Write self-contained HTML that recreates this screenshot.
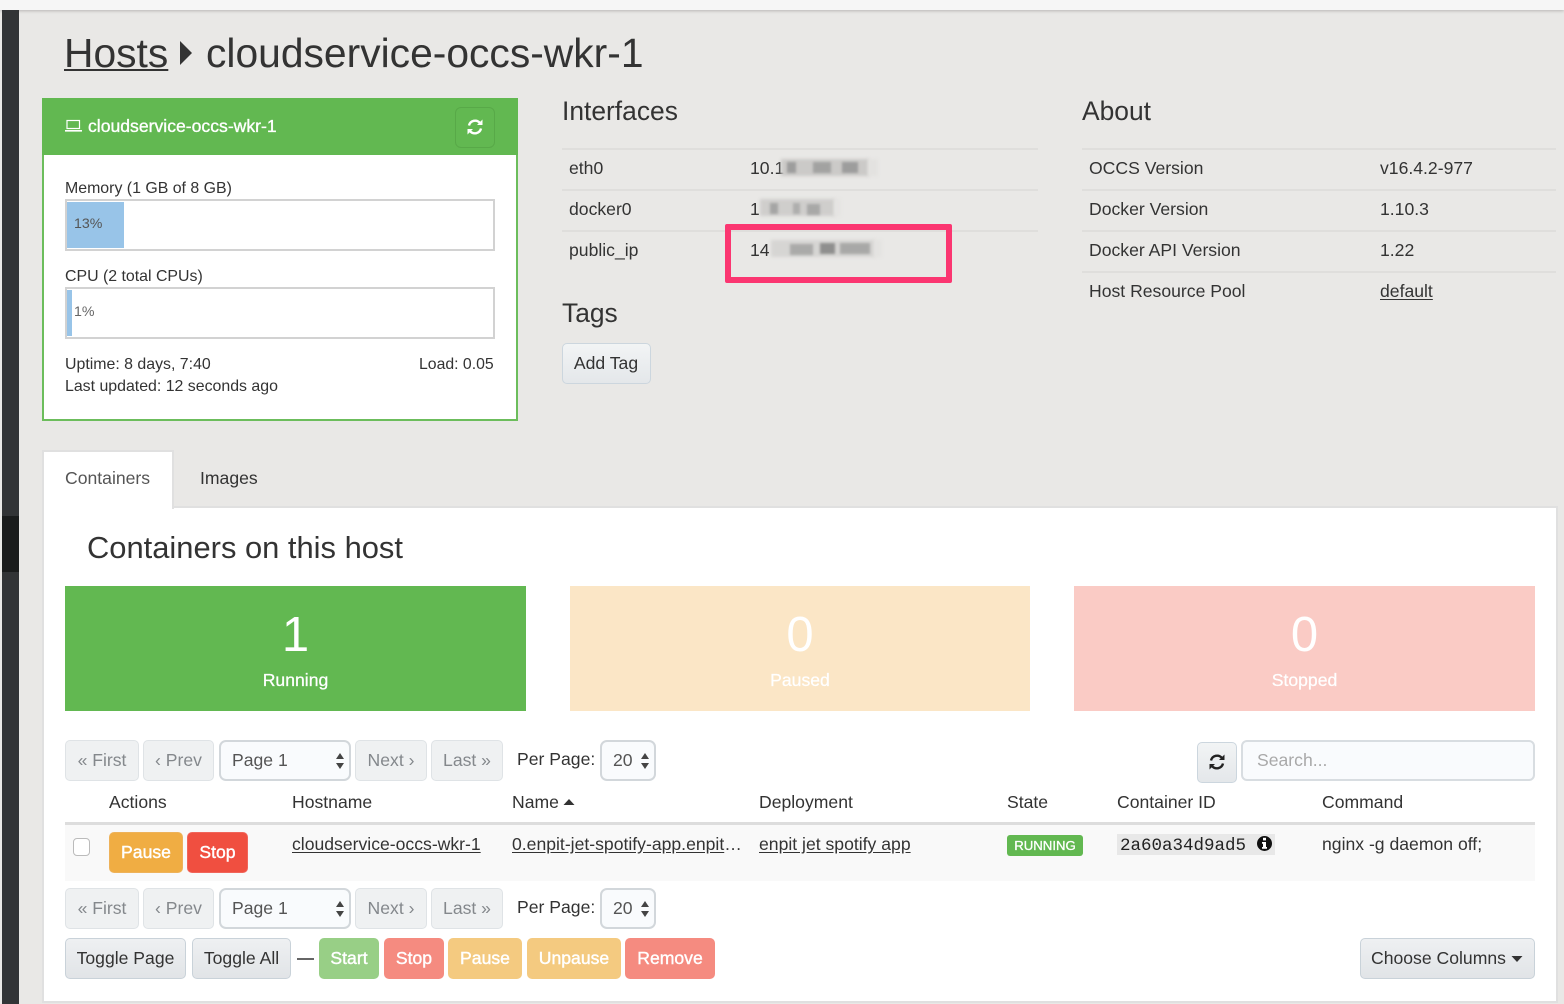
<!DOCTYPE html>
<html><head><meta charset="utf-8"><title>Hosts</title>
<style>
html,body{margin:0;padding:0}
body{width:1564px;height:1004px;position:relative;overflow:hidden;background:#e9e8e6;font-family:"Liberation Sans",sans-serif;font-size:17.6px;color:#333}
.a{position:absolute}
.t{position:absolute;white-space:nowrap;line-height:20px}
u{text-underline-offset:2px}
.b{position:absolute;box-sizing:border-box;border:1.5px solid #ccd6de;border-radius:5px;background:linear-gradient(#f2f4f5,#e4e7ea);text-align:center;white-space:nowrap;height:41px;line-height:38px;font-size:17.6px;color:#333}
.dis{background:#eff1f2;color:#84888c;border-color:#dfe3e6;height:41px}
.sel{background:#f9fbfd;border:2px solid #d2d7db;border-radius:7px;color:#555;text-align:left;padding-left:11px;height:41px;line-height:37px}
.c{color:#fff;border:1px solid transparent;font-weight:400;-webkit-text-stroke:.4px #fff}
.ln{position:absolute;height:2px;background:#dfdedc}
.blk{position:absolute;height:11px;filter:blur(1.2px)}
.st{position:absolute;height:17px;filter:blur(1.6px)}
</style></head><body>
<div class="a" style="left:0;top:0;width:1564px;height:10px;background:#f6f6f6;box-shadow:0 1px 3px rgba(0,0,0,.22)"></div>
<div class="a" style="left:2px;top:10px;width:17px;height:994px;background:#323436"></div>
<div class="a" style="left:2px;top:516px;width:17px;height:56px;background:#1a1c1c"></div>

<div class="t" style="left:64px;top:31px;font-size:40.8px;line-height:44px;color:#333"><u style="text-decoration-thickness:2px">Hosts</u></div>
<svg class="a" style="left:179px;top:40px" width="14" height="26"><path d="M1 1L13 13L1 25Z" fill="#333"/></svg>
<div class="t" style="left:206px;top:31px;font-size:40.8px;line-height:44px;color:#333">cloudservice-occs-wkr-1</div>

<!-- host panel -->
<div class="a" style="left:42px;top:98px;width:476px;height:323px;box-sizing:border-box;border:2px solid #6cbd5c;background:#fff"></div>
<div class="a" style="left:42px;top:98px;width:476px;height:57px;background:#62b851"></div>
<svg class="a" style="left:64px;top:118px" width="19" height="15" viewBox="0 0 19 15" fill="none" stroke="#fff"><rect x="3" y="2.5" width="12.5" height="8" stroke-width="1.2"/><path d="M1 12.8H18" stroke-width="1.6"/></svg>
<div class="t" style="left:88px;top:116px;font-size:17.6px;color:#fff;-webkit-text-stroke:.35px #fff">cloudservice-occs-wkr-1</div>
<div class="a" style="left:455px;top:107px;width:40px;height:41px;box-sizing:border-box;border:1px solid #58a948;border-radius:6px;background:#62b851"></div>
<svg class="a" style="left:466px;top:118px" width="18" height="18" viewBox="0 0 18 18" fill="none" stroke="#fff" stroke-width="2.4"><path d="M3 7.5A6.3 6.3 0 0 1 14 5"/><path d="M15 10.5A6.3 6.3 0 0 1 4 13"/><path d="M16.5 1.5V7H11Z" fill="#fff" stroke="none"/><path d="M1.5 16.5V11H7Z" fill="#fff" stroke="none"/></svg>

<div class="t" style="left:65px;top:178px;font-size:15.9px;margin-top:1px">Memory (1 GB of 8 GB)</div>
<div class="a" style="left:65px;top:199px;width:430px;height:52px;box-sizing:border-box;border:2px solid #d2d2d2;background:#fff"></div>
<div class="a" style="left:67px;top:202px;width:57px;height:46px;background:#98c4e8"></div>
<div class="t" style="left:74px;top:214px;font-size:14.2px;color:#555">13%</div>
<div class="t" style="left:65px;top:267px;font-size:15.9px">CPU (2 total CPUs)</div>
<div class="a" style="left:65px;top:287px;width:430px;height:52px;box-sizing:border-box;border:2px solid #d2d2d2;background:#fff"></div>
<div class="a" style="left:67px;top:290px;width:5px;height:46px;background:#98c4e8"></div>
<div class="t" style="left:74px;top:302px;font-size:14.2px;color:#666">1%</div>
<div class="t" style="left:65px;top:355px;font-size:15.9px">Uptime: 8 days, 7:40</div>
<div class="t" style="left:419px;top:355px;font-size:15.8px">Load: 0.05</div>
<div class="t" style="left:65px;top:377px;font-size:15.9px">Last updated: 12 seconds ago</div>

<!-- interfaces -->
<div class="t" style="left:562px;top:99px;font-size:26.4px;line-height:24px">Interfaces</div>
<div class="ln" style="left:562px;top:148px;width:476px"></div>
<div class="ln" style="left:562px;top:189px;width:476px"></div>
<div class="ln" style="left:562px;top:230px;width:476px"></div>
<div class="t" style="left:569px;top:158px">eth0</div>
<div class="t" style="left:569px;top:199px">docker0</div>
<div class="t" style="left:569px;top:240px">public_ip</div>
<div class="t" style="left:750px;top:158px">10.1</div>
<div class="t" style="left:750px;top:199px">1</div>
<div class="t" style="left:750px;top:240px">14</div>

<div class="st" style="left:781px;top:159px;width:88px;background:#cbcac8"></div>
<div class="st" style="left:868px;top:159px;width:10px;background:#e3e2e0"></div>
<div class="blk" style="left:787px;top:162px;width:9px;background:#9d9d9c"></div>
<div class="blk" style="left:813px;top:162px;width:18px;background:#a2a2a1"></div>
<div class="blk" style="left:842px;top:162px;width:16px;background:#9d9d9c"></div>

<div class="st" style="left:760px;top:199px;width:75px;background:#cfcecc"></div>
<div class="st" style="left:834px;top:199px;width:7px;background:#e5e4e2"></div>
<div class="blk" style="left:770px;top:203px;width:8px;background:#a5a5a4"></div>
<div class="blk" style="left:793px;top:203px;width:7px;background:#aeaead"></div>
<div class="blk" style="left:807px;top:204px;width:13px;background:#a8a8a7"></div>

<div class="st" style="left:771px;top:240px;width:104px;background:#d6d5d3"></div>
<div class="st" style="left:874px;top:240px;width:8px;background:#e4e3e1"></div>
<div class="blk" style="left:790px;top:244px;width:23px;background:#aaaaa9"></div>
<div class="blk" style="left:820px;top:243px;width:15px;background:#8f8f8e"></div>
<div class="blk" style="left:840px;top:243px;width:30px;background:#a8a8a7"></div>

<div class="a" style="left:725px;top:224px;width:227px;height:59px;box-sizing:border-box;border:6px solid #fb3671;border-radius:2px"></div>

<div class="t" style="left:562px;top:301px;font-size:26.4px;line-height:24px">Tags</div>
<div class="b" style="left:562px;top:343px;width:89px;text-indent:-1px">Add Tag</div>

<!-- about -->
<div class="t" style="left:1082px;top:99px;font-size:26.4px;line-height:24px">About</div>
<div class="ln" style="left:1082px;top:148px;width:474px"></div>
<div class="ln" style="left:1082px;top:189px;width:474px"></div>
<div class="ln" style="left:1082px;top:230px;width:474px"></div>
<div class="ln" style="left:1082px;top:271px;width:474px"></div>
<div class="t" style="left:1089px;top:158px">OCCS Version</div>
<div class="t" style="left:1089px;top:199px">Docker Version</div>
<div class="t" style="left:1089px;top:240px">Docker API Version</div>
<div class="t" style="left:1089px;top:281px">Host Resource Pool</div>
<div class="t" style="left:1380px;top:158px">v16.4.2-977</div>
<div class="t" style="left:1380px;top:199px">1.10.3</div>
<div class="t" style="left:1380px;top:240px">1.22</div>
<div class="t" style="left:1380px;top:281px"><u>default</u></div>

<!-- tab content -->
<div class="a" style="left:42px;top:506px;width:1516px;height:497px;box-sizing:border-box;border:2px solid #e0e0e0;background:#fff"></div>
<div class="a" style="left:42px;top:450px;width:132px;height:59px;box-sizing:border-box;border:2px solid #e0e0e0;border-bottom:0;background:#fff"></div>
<div class="t" style="left:65px;top:468px;color:#555">Containers</div>
<div class="t" style="left:200px;top:468px">Images</div>
<div class="t" style="left:87px;top:530px;font-size:30.9px;line-height:36px">Containers on this host</div>

<div class="a" style="left:65px;top:586px;width:461px;height:125px;background:#62b851"></div>
<div class="a" style="left:570px;top:586px;width:460px;height:125px;background:#fbe6c6"></div>
<div class="a" style="left:1074px;top:586px;width:461px;height:125px;background:#facbc5"></div>
<div class="t" style="left:65px;top:610px;width:461px;text-align:center;font-size:49px;line-height:50px;color:#fff">1</div>
<div class="t" style="left:570px;top:610px;width:460px;text-align:center;font-size:49px;line-height:50px;color:#fff">0</div>
<div class="t" style="left:1074px;top:610px;width:461px;text-align:center;font-size:49px;line-height:50px;color:#fff">0</div>
<div class="t" style="left:65px;top:670px;width:461px;text-align:center;color:#fff;-webkit-text-stroke:.25px #fff">Running</div>
<div class="t" style="left:570px;top:670px;width:460px;text-align:center;color:#fff;-webkit-text-stroke:.25px #fff">Paused</div>
<div class="t" style="left:1074px;top:670px;width:461px;text-align:center;color:#fff;-webkit-text-stroke:.25px #fff">Stopped</div>

<!-- pager top -->
<div class="b dis" style="left:65px;top:740px;width:74px">« First</div>
<div class="b dis" style="left:143px;top:740px;width:71px">‹ Prev</div>
<div class="b sel" style="left:219px;top:740px;width:132px">Page 1</div>
<svg class="a" style="left:335px;top:752px" width="10" height="18"><path d="M5 1L9 7H1ZM5 17L9 11H1Z" fill="#444"/></svg>
<div class="b dis" style="left:355px;top:740px;width:72px">Next ›</div>
<div class="b dis" style="left:431px;top:740px;width:72px">Last »</div>
<div class="t" style="left:517px;top:749px">Per Page:</div>
<div class="b sel" style="left:600px;top:740px;width:56px">20</div>
<svg class="a" style="left:640px;top:752px" width="10" height="18"><path d="M5 1L9 7H1ZM5 17L9 11H1Z" fill="#444"/></svg>

<div class="b" style="left:1197px;top:742px;width:40px;height:41px"></div>
<svg class="a" style="left:1208px;top:753px" width="18" height="18" viewBox="0 0 18 18" fill="none" stroke="#222" stroke-width="2.4"><path d="M3 7.5A6.3 6.3 0 0 1 14 5"/><path d="M15 10.5A6.3 6.3 0 0 1 4 13"/><path d="M16.5 1.5V7H11Z" fill="#222" stroke="none"/><path d="M1.5 16.5V11H7Z" fill="#222" stroke="none"/></svg>
<div class="a" style="left:1241px;top:740px;width:294px;height:41px;box-sizing:border-box;border:2px solid #d8dde1;border-radius:6px;background:#f9fbfd"></div>
<div class="t" style="left:1257px;top:750px;color:#a9a9a9">Search...</div>

<!-- table -->
<div class="t" style="left:109px;top:792px">Actions</div>
<div class="t" style="left:292px;top:792px">Hostname</div>
<div class="t" style="left:512px;top:792px">Name</div>
<svg class="a" style="left:563px;top:798px" width="12" height="8"><path d="M6 1L11.5 7H.5Z" fill="#333"/></svg>
<div class="t" style="left:759px;top:792px">Deployment</div>
<div class="t" style="left:1007px;top:792px">State</div>
<div class="t" style="left:1117px;top:792px">Container ID</div>
<div class="t" style="left:1322px;top:792px">Command</div>
<div class="a" style="left:65px;top:825px;width:1470px;height:56px;background:#f9f9f9"></div>
<div class="a" style="left:65px;top:822px;width:1470px;height:3px;background:#dddddd"></div>
<div class="a" style="left:73px;top:838px;width:17px;height:18px;box-sizing:border-box;border:1.5px solid #bbb;border-radius:4px;background:#fff"></div>
<div class="b c" style="left:109px;top:832px;width:74px;background:#f0ad43;border-color:#eeb25a">Pause</div>
<div class="b c" style="left:187px;top:832px;width:61px;background:#f04f40;border-color:#f1655a">Stop</div>
<div class="t" style="left:292px;top:834px"><u>cloudservice-occs-wkr-1</u></div>
<div class="t" style="left:512px;top:834px"><u>0.enpit-jet-spotify-app.enpit</u>…</div>
<div class="t" style="left:759px;top:834px"><u>enpit jet spotify app</u></div>
<div class="a" style="left:1007px;top:835px;width:76px;height:21px;border-radius:3px;background:#62b851"></div>
<div class="t" style="left:1007px;top:835px;width:76px;text-align:center;color:#fff;font-size:13.2px;line-height:21px;-webkit-text-stroke:.3px #fff">RUNNING</div>
<div class="a" style="left:1117px;top:834px;width:158px;height:21px;background:#e8e8e8"></div>
<div class="t" style="left:1120px;top:836px;font-family:'Liberation Mono',monospace;font-size:17.5px;color:#222">2a60a34d9ad5</div>
<svg class="a" style="left:1256px;top:835px" width="17" height="17" viewBox="0 0 17 17"><circle cx="8.5" cy="8.5" r="7.5" fill="#111"/><rect x="7" y="2.8" width="3" height="2.6" fill="#fff"/><path d="M6 7H10V12H11V13.7H6V12H7V8.7H6Z" fill="#fff"/></svg>
<div class="t" style="left:1322px;top:834px">nginx -g daemon off;</div>

<!-- pager bottom -->
<div class="b dis" style="left:65px;top:888px;width:74px">« First</div>
<div class="b dis" style="left:143px;top:888px;width:71px">‹ Prev</div>
<div class="b sel" style="left:219px;top:888px;width:132px">Page 1</div>
<svg class="a" style="left:335px;top:900px" width="10" height="18"><path d="M5 1L9 7H1ZM5 17L9 11H1Z" fill="#444"/></svg>
<div class="b dis" style="left:355px;top:888px;width:72px">Next ›</div>
<div class="b dis" style="left:431px;top:888px;width:72px">Last »</div>
<div class="t" style="left:517px;top:897px">Per Page:</div>
<div class="b sel" style="left:600px;top:888px;width:56px">20</div>
<svg class="a" style="left:640px;top:900px" width="10" height="18"><path d="M5 1L9 7H1ZM5 17L9 11H1Z" fill="#444"/></svg>

<!-- actions -->
<div class="b" style="left:65px;top:938px;width:121px;border-color:#c9d2d9;background:linear-gradient(#eef0f2,#e1e4e7)">Toggle Page</div>
<div class="b" style="left:192px;top:938px;width:99px;border-color:#c9d2d9;background:linear-gradient(#eef0f2,#e1e4e7)">Toggle All</div>
<div class="a" style="left:297px;top:958px;width:17px;height:1.5px;background:#666"></div>
<div class="b c" style="left:319px;top:938px;width:60px;background:#98cf86;border-color:#98cf86">Start</div>
<div class="b c" style="left:384px;top:938px;width:60px;background:#f58b80;border-color:#f58b80">Stop</div>
<div class="b c" style="left:448px;top:938px;width:74px;background:#f4ca80;border-color:#f4ca80">Pause</div>
<div class="b c" style="left:527px;top:938px;width:94px;background:#f4ca80;border-color:#f4ca80">Unpause</div>
<div class="b c" style="left:625px;top:938px;width:90px;background:#f58b80;border-color:#f58b80">Remove</div>
<div class="b" style="left:1360px;top:938px;width:175px;border-color:#c9d2d9;background:linear-gradient(#eef0f2,#e1e4e7);text-align:left;padding-left:10px">Choose Columns</div>
<svg class="a" style="left:1511px;top:955px" width="12" height="8"><path d="M.5 1H11.5L6 7Z" fill="#333"/></svg>
</body></html>
